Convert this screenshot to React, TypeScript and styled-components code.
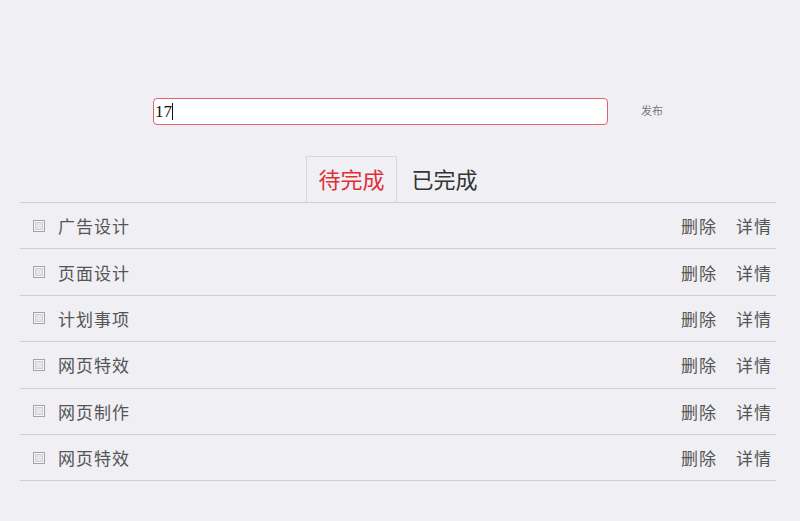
import React, { useState } from "react";
import styled, { createGlobalStyle } from "styled-components";

const GlobalStyle = createGlobalStyle`
  html, body {
    margin: 0;
    padding: 0;
    background: #efeff4;
    font-family: "Noto Sans CJK SC", "Noto Sans", sans-serif;
  }
`;

const Page = styled.div`
  width: 756px;
  padding: 98px 20px 0;
`;

const Composer = styled.div`
  display: flex;
  align-items: center;
  padding-left: 133px;
`;

const InputWrap = styled.div`
  position: relative;
  display: flex;
`;

const TextInput = styled.input`
  box-sizing: border-box;
  width: 455px;
  height: 27px;
  margin: 0;
  border: 1px solid #e0626e;
  border-radius: 4px;
  background: #fff;
  padding: 0 1px;
  font-family: "Liberation Serif", "Noto Sans CJK SC", serif;
  font-size: 17px;
  color: #111;
  outline: none;
  caret-color: transparent;
`;

const Caret = styled.span`
  position: absolute;
  left: 19px;
  top: 5px;
  width: 1px;
  height: 17px;
  background: #111;
`;

const PublishButton = styled.button`
  margin: 0 0 3px 33px;
  border: none;
  background: transparent;
  padding: 0;
  font-family: "Noto Sans CJK SC", sans-serif;
  font-size: 11px;
  color: #777;
  cursor: pointer;
`;

const Tabs = styled.div`
  display: flex;
  justify-content: center;
  gap: 3px;
  margin-top: 31px;
  border-bottom: 1px solid #cfcfd3;
`;

const Tab = styled.div<{ $active?: boolean }>`
  box-sizing: border-box;
  height: 46px;
  padding: 0 11px 4px;
  display: flex;
  align-items: center;
  font-size: 22px;
  line-height: 1;
  color: ${(p) => (p.$active ? "#e02f35" : "#333")};
  border: 1px solid ${(p) => (p.$active ? "#d8d8dc" : "transparent")};
  border-bottom: none;
  cursor: pointer;
`;

const List = styled.ul`
  list-style: none;
  margin: 0;
  padding: 0;
`;

const Row = styled.li`
  box-sizing: border-box;
  height: 46.4px;
  display: flex;
  align-items: center;
  padding: 0 4px 0 13px;
  border-bottom: 1px solid #cfcfd3;
  font-size: 17px;
  color: #555;
`;

const Check = styled.input`
  appearance: none;
  box-sizing: border-box;
  width: 12px;
  height: 12px;
  margin: 0 13px 0 0;
  border: 1px solid #a4a4a8;
  background: #e6e6ea;
  box-shadow: inset 0 0 0 1px #f6f6f8, inset 0 0 0 2px #cfcfd4;
  cursor: pointer;

  &:checked {
    background: #b8b8c0;
  }
`;

const Title = styled.span`
  flex: 1;
  letter-spacing: 1px;
`;

const Actions = styled.div`
  display: flex;
  gap: 19px;
`;

const Action = styled.span`
  letter-spacing: 1px;
  cursor: pointer;
`;

const todos = ["广告设计", "页面设计", "计划事项", "网页特效", "网页制作", "网页特效"];

export default function App() {
  const [text, setText] = useState("17");
  const [tab, setTab] = useState(0);

  return (
    <>
      <GlobalStyle />
      <Page>
        <Composer>
          <InputWrap>
            <TextInput value={text} onChange={(e) => setText(e.target.value)} />
            <Caret />
          </InputWrap>
          <PublishButton>发布</PublishButton>
        </Composer>
        <Tabs>
          <Tab $active={tab === 0} onClick={() => setTab(0)}>待完成</Tab>
          <Tab $active={tab === 1} onClick={() => setTab(1)}>已完成</Tab>
        </Tabs>
        <List>
          {todos.map((t, i) => (
            <Row key={i}>
              <Check type="checkbox" />
              <Title>{t}</Title>
              <Actions>
                <Action>删除</Action>
                <Action>详情</Action>
              </Actions>
            </Row>
          ))}
        </List>
      </Page>
    </>
  );
}
